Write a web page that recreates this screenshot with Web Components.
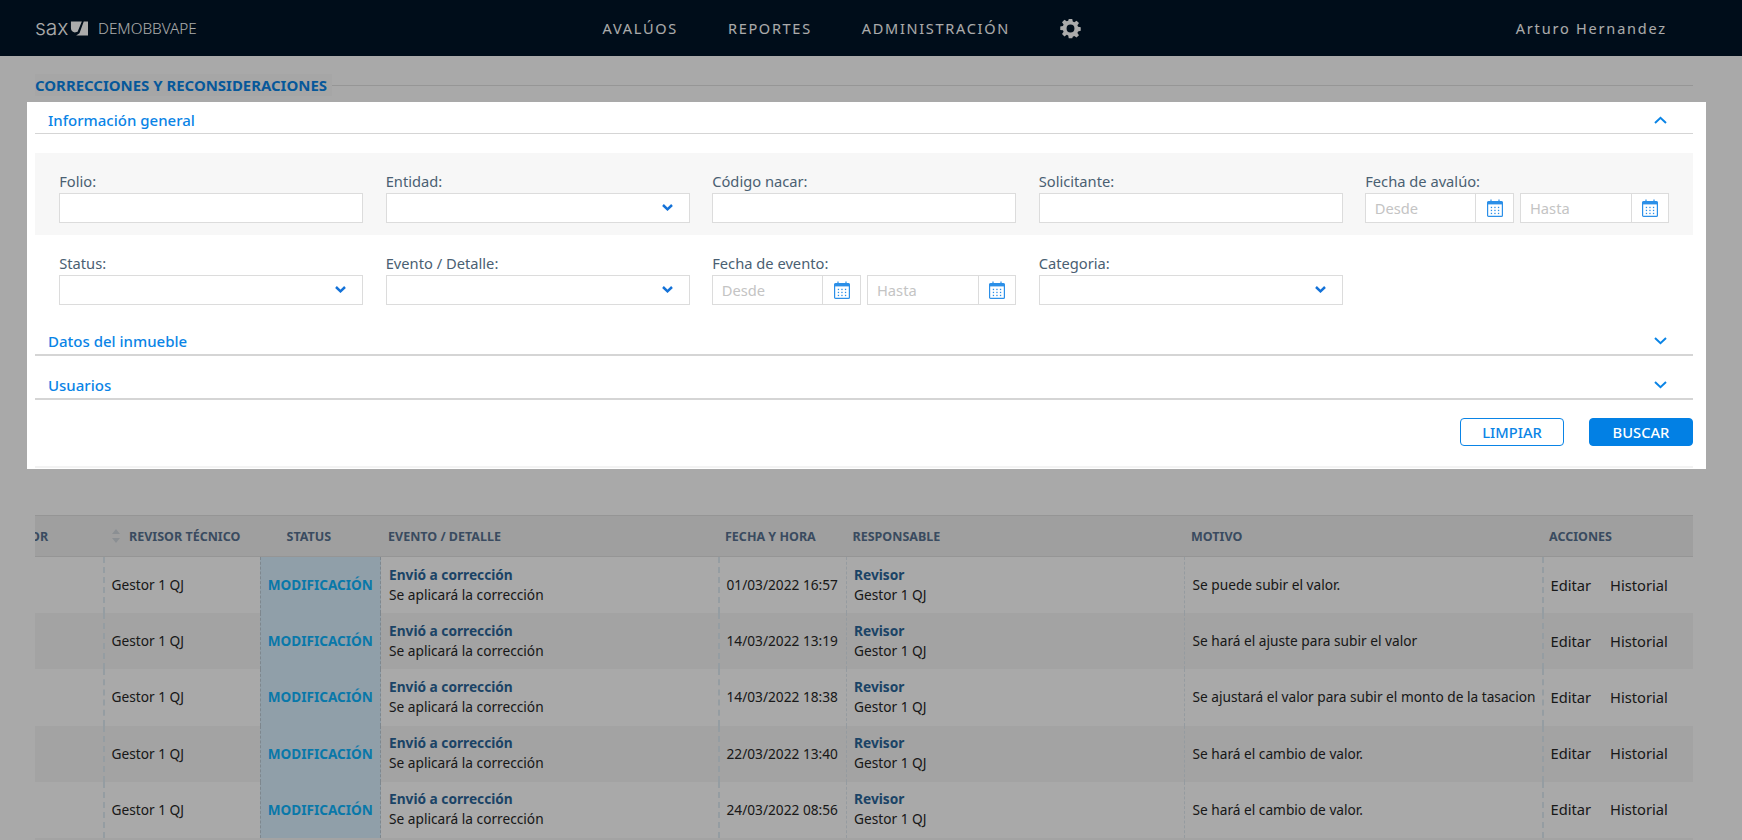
<!DOCTYPE html>
<html lang="es">
<head>
<meta charset="utf-8">
<title>Correcciones y reconsideraciones</title>
<style>
  html, body { margin: 0; height: 840px; overflow: hidden; }
  body { background: #fcfcfc; font-family: "Noto Sans", "Open Sans", sans-serif; position: relative; }
</style>
</head>
<body>
<app-header></app-header>
<page-title>CORRECCIONES Y RECONSIDERACIONES</page-title>
<results-table></results-table>
<modal-overlay>
  <filter-panel></filter-panel>
</modal-overlay>

<script>
"use strict";
const CHEVRON_SELECT = `<svg width="11" height="7" viewBox="0 0 11 7"><path d="M1 1l4.500 4.300L10 1" fill="none" stroke="currentColor" stroke-width="2.500"/></svg>`;
const CHEVRON_DOWN = `<svg width="13" height="8" viewBox="0 0 13 8"><path d="M1 1l5.500 5.200L12 1" fill="none" stroke="currentColor" stroke-width="2"/></svg>`;
const CHEVRON_UP = `<svg width="13" height="8" viewBox="0 0 13 8"><path d="M1 7l5.500-5.200L12 7" fill="none" stroke="currentColor" stroke-width="2"/></svg>`;
const CALENDAR = `<svg width="16" height="18" viewBox="0 0 16 18"><path d="M4 0.500v3.500M12 0.500v3.500" stroke="#2b8fe8" stroke-width="1.200" fill="none"/><rect x="0.600" y="2.600" width="14.800" height="14.800" rx="1" fill="#fff" stroke="#2b8fe8" stroke-width="1.200"/><rect x="0.600" y="2.600" width="14.800" height="2.800" fill="#2b8fe8"/><g fill="#2b8fe8"><rect x="3.800" y="7.800" width="1.300" height="1.300"/><rect x="7.300" y="7.800" width="1.300" height="1.300"/><rect x="10.900" y="7.800" width="1.300" height="1.300"/><rect x="3.800" y="10.800" width="1.300" height="1.300"/><rect x="7.300" y="10.800" width="1.300" height="1.300"/><rect x="10.900" y="10.800" width="1.300" height="1.300"/><rect x="3.800" y="13.800" width="1.300" height="1.300"/><rect x="7.300" y="13.800" width="1.300" height="1.300"/><rect x="10.900" y="13.800" width="1.300" height="1.300"/></g></svg>`;

class AppHeader extends HTMLElement {
    constructor() {
        super();
        this.attachShadow({ mode: "open" });
        this.shadowRoot.innerHTML = `
<style>
  :host { display: flex; align-items: center; height: 56px; background: #001427; color: #fff; padding-left: 35px; box-sizing: border-box; font-size: 14.500px; }
  .logo { display: flex; align-items: center; width: 63px; gap: 1px; }
  .sax { font: 300 21px/1 Inter, sans-serif; margin-top: -2px; }
  .tenant { font-size: 15.300px; font-weight: 300; width: 504.600px; }
  nav { display: flex; align-items: center; gap: 50px; letter-spacing: 1.700px; }
  .gear { display: flex; margin-left: 0; }
  .user { margin-left: auto; padding-right: 75px; letter-spacing: 1.800px; }
</style>
<div class="logo"><span class="sax">sax</span>
  <svg width="18" height="15" viewBox="0 0 19 15"><path d="M1 0h11.500L8 11 5 11.800 C2 11 1 9 1 7z M14.500 0H19v15H6.500L10 12.500z" fill="#fff"/></svg>
</div>
<span class="tenant">DEMOBBVAPE</span>
<nav>
  <span>AVALÚOS</span><span>REPORTES</span><span>ADMINISTRACIÓN</span>
  <span class="gear"><svg width="21" height="21" viewBox="0 0 24 24"><path fill="#fff" fill-rule="evenodd" d="M10 1h4l.6 3.100 1.700.7 2.600-1.800 2.800 2.800-1.800 2.600.7 1.700 3.100.6v4l-3.100.6-.7 1.700 1.800 2.600-2.800 2.800-2.600-1.800-1.700.7L14 23h-4l-.6-3.100-1.700-.7-2.600 1.800-2.800-2.800 1.800-2.600-.7-1.700L.3 13.800v-4l3.100-.6.7-1.700L2.300 4.800 5.100 2l2.600 1.800 1.700-.7zM12 7.500a4.500 4.500 0 1 0 0 9 4.500 4.500 0 0 0 0-9z"/></svg></span>
</nav>
<span class="user">Arturo Hernandez</span>`;
    }
}
customElements.define("app-header", AppHeader);

class PageTitle extends HTMLElement {
    constructor() {
        super();
        this.attachShadow({ mode: "open" });
        this.shadowRoot.innerHTML = `
<style>
  :host { display: flex; align-items: center; height: 22px; margin: 18px 49px 0 35px; color: #0a84e6; font-size: 14.950px; font-weight: 700; }
  .text { background: #f8f8f8; padding-right: 5px; line-height: 22px; white-space: nowrap; }
  .line { flex: 1; height: 1px; background: #e0e0e0; }
</style>
<span class="text"><slot></slot></span><span class="line"></span>`;
    }
}
customElements.define("page-title", PageTitle);

const TableRows = [
    ["01/03/2022 16:57", "Se puede subir el valor."],
    ["14/03/2022 13:19", "Se hará el ajuste para subir el valor"],
    ["14/03/2022 18:38", "Se ajustará el valor para subir el monto de la tasacion"],
    ["22/03/2022 13:40", "Se hará el cambio de valor."],
    ["24/03/2022 08:56", "Se hará el cambio de valor."],
];

class ResultsTable extends HTMLElement {
    constructor() {
        super();
        this.attachShadow({ mode: "open" });
        const rows = TableRows.map(([date, motive]) => `
<div class="row">
  <div class="c"></div>
  <div class="c thick">Gestor 1 QJ</div>
  <div class="c status">MODIFICACIÓN</div>
  <div class="c two"><b>Envió a corrección</b><span>Se aplicará la corrección</span></div>
  <div class="c thick">${date}</div>
  <div class="c thin two"><b>Revisor</b><span>Gestor 1 QJ</span></div>
  <div class="c thin">${motive}</div>
  <div class="c thick act"><span>Editar</span><span>Historial</span></div>
</div>`).join("");
        this.shadowRoot.innerHTML = `
<style>
  :host { display: block; margin: 419px 49px 0 35px; font-size: 13.700px; color: #262626; overflow: hidden; height: 325px; }
  .row { display: grid; grid-template-columns: 68px 156.500px 121.500px 337px 127.500px 338.500px 358px 151px; height: 56.200px; }
  .body .row:nth-child(even) { background: #f3f3f3; }
  .head { height: 42px; background: #eee; border-top: 1px solid #dfdfdf; border-bottom: 1px solid #dfdfdf; box-sizing: border-box; color: #57718f; font-weight: 700; font-size: 12.500px; }
  .stub { height: 20px; background: #f3f3f3; }
  .head .h, .c { display: flex; align-items: center; min-width: 0; white-space: nowrap; box-sizing: border-box; }
  .head .h { padding-left: 7px; }
  .head .sort { padding-left: 9px; gap: 9px; }
  .head .clip { padding: 0; margin-left: -5px; }
  .head .st { padding-left: 27px; }
  .sort svg { flex: none; }
  .c { padding-left: 8px; padding-bottom: 1px; }
  .thick { border-left: 2px dashed #dfeaf2; padding-left: 6.500px; }
  .thin { border-left: 1px dashed #dfe8ef; padding-left: 7.500px; }
  .status { background: #d7edfc; border-left: 1px dashed #bccad4; border-right: 1px dashed #bccad4; color: #0eb4fc; font-weight: 700; font-size: 13.600px; justify-content: center; padding: 0 0 1px; }
  .two { flex-direction: column; align-items: flex-start; justify-content: center; line-height: 20px; }
  .two b { color: #2a6598; font-weight: 700; }
  .act { font-size: 14.700px; gap: 19px; }
</style>
<div class="row head">
  <div class="h clip">OR</div>
  <div class="h sort"><svg width="8" height="14" viewBox="0 0 8 14"><path d="M4 0l4 5H0zM4 14l4-5H0z" fill="#d0d6db"/></svg>REVISOR TÉCNICO</div>
  <div class="h st">STATUS</div>
  <div class="h">EVENTO / DETALLE</div>
  <div class="h">FECHA Y HORA</div>
  <div class="h">RESPONSABLE</div>
  <div class="h">MOTIVO</div>
  <div class="h">ACCIONES</div>
</div>
<div class="body">${rows}<div class="stub"></div></div>`;
    }
}
customElements.define("results-table", ResultsTable);

class ModalOverlay extends HTMLElement {
    constructor() {
        super();
        this.attachShadow({ mode: "open" });
        this.shadowRoot.innerHTML = `
<style>
  :host { display: block; position: absolute; inset: 0; background: rgba(0, 0, 0, .33); padding: 102px 36px 0 27px; }
</style>
<slot></slot>`;
    }
}
customElements.define("modal-overlay", ModalOverlay);

class FormField extends HTMLElement {
    constructor() {
        super();
        this.attachShadow({ mode: "open" });
        const label = this.getAttribute("label");
        const type = this.getAttribute("type") || "text";
        let control = `<div class="box"></div>`;
        if (type === "select")
            control = `<div class="box select">${CHEVRON_SELECT}</div>`;
        if (type === "date")
            control = `<div class="dates">
  <div class="box date"><span>Desde</span><i>${CALENDAR}</i></div>
  <div class="box date"><span>Hasta</span><i>${CALENDAR}</i></div>
</div>`;
        this.shadowRoot.innerHTML = `
<style>
  :host { display: block; font-size: 14.700px; color: #4a6072; }
  label { display: block; height: 21px; line-height: 19px; }
  .box { height: 30px; box-sizing: border-box; background: #fff; border: 1px solid #dcdcdc; display: flex; align-items: center; }
  .select { justify-content: flex-end; padding-right: 16px; color: #1472d8; }
  .dates { display: grid; grid-template-columns: 148.700px 148.700px; gap: 6.600px; }
  .date span { flex: 1; padding-left: 8.500px; color: #c4c4c4; }
  .date i { width: 36.500px; height: 28px; border-left: 1px solid #dcdcdc; display: flex; align-items: center; justify-content: center; }
</style>
<label>${label}</label>${control}`;
    }
}
customElements.define("form-field", FormField);

class CollapseHead extends HTMLElement {
    constructor() {
        super();
        this.attachShadow({ mode: "open" });
        const open = this.hasAttribute("open");
        this.shadowRoot.innerHTML = `
<style>
  :host { display: flex; align-items: flex-end; justify-content: space-between; box-sizing: border-box; height: ${open ? 32 : 44}px; border-bottom: ${open ? 1 : 2}px solid #d5d5d5; padding: 0 26px 1.500px 13px; color: #0a84e6; font-size: 15px; font-weight: 500; line-height: 24px; }
  span { display: flex; align-items: center; height: 24px; }
</style>
<slot></slot><span>${open ? CHEVRON_UP : CHEVRON_DOWN}</span>`;
    }
}
customElements.define("collapse-head", CollapseHead);

class FilterPanel extends HTMLElement {
    constructor() {
        super();
        this.attachShadow({ mode: "open" });
        this.shadowRoot.innerHTML = `
<style>
  :host { display: block; background: #fff; padding: 0 13px 1px 8px; height: 366.700px; box-sizing: border-box; }
  .grid { display: grid; grid-template-columns: repeat(5, 304px); column-gap: 22.500px; padding: 19px 0 12px 24.200px; }
  .band { background: #f7f7f7; margin-top: 18.500px; }
  .second { padding-bottom: 7.500px; }
  .actions { display: flex; justify-content: flex-end; gap: 25px; margin-top: 17.500px; }
  button { width: 104px; height: 28px; box-sizing: border-box; border: 1px solid #0a84e6; border-radius: 4px; background: #fff; color: #0a84e6; font: 500 14.700px "Noto Sans", sans-serif; padding: 0; }
  button.primary { background: #0280e4; color: #fff; border-color: #0280e4; }
  .foot { height: 2px; background: #f3f3f3; margin-top: 20px; }
</style>
<collapse-head open>Información general</collapse-head>
<div class="grid band">
  <form-field label="Folio:"></form-field>
  <form-field label="Entidad:" type="select"></form-field>
  <form-field label="Código nacar:"></form-field>
  <form-field label="Solicitante:"></form-field>
  <form-field label="Fecha de avalúo:" type="date"></form-field>
</div>
<div class="grid second">
  <form-field label="Status:" type="select"></form-field>
  <form-field label="Evento / Detalle:" type="select"></form-field>
  <form-field label="Fecha de evento:" type="date"></form-field>
  <form-field label="Categoria:" type="select"></form-field>
</div>
<collapse-head>Datos del inmueble</collapse-head>
<collapse-head>Usuarios</collapse-head>
<div class="actions"><button>LIMPIAR</button><button class="primary">BUSCAR</button></div>
<div class="foot"></div>`;
    }
}
customElements.define("filter-panel", FilterPanel);
</script>
</body>
</html>
